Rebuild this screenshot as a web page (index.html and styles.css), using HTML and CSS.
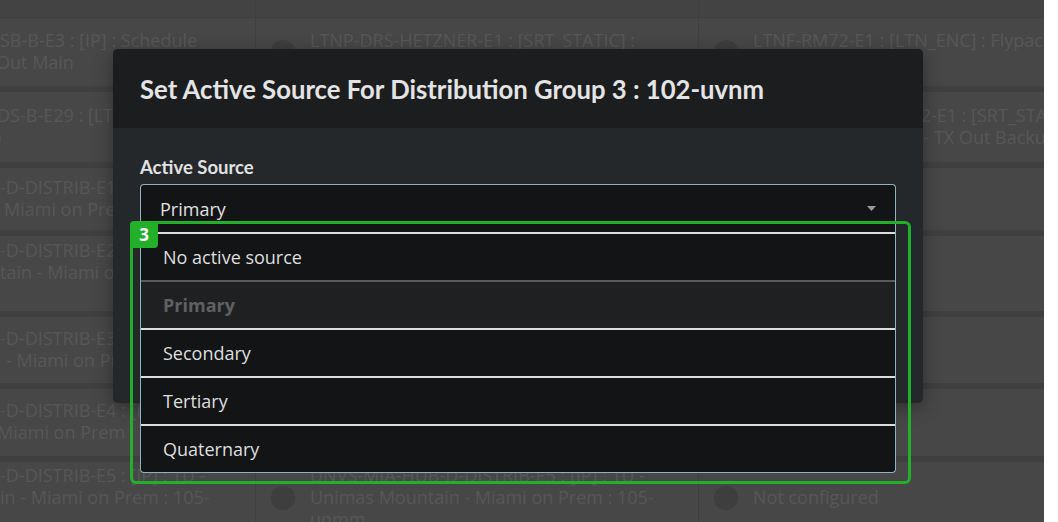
FILE: index.html
```html
<!DOCTYPE html>
<html lang="en">
<head>
  <meta charset="UTF-8">
  <title>Distribution Groups</title>
  <link rel="stylesheet" href="styles.css">
</head>
<body>

  <div class="page">
    <!-- dimmed board behind the modal -->
    <div class="board">
      <div class="cell cell-top"></div>
      <div class="cell cell-top"></div>
      <div class="cell cell-top"></div>

      <div class="cell cell-cut"><div class="lines"><div>SB-B-E3 : [IP] : Schedule</div><div class="in-2">Out Main</div></div></div>
      <div class="cell"><span class="dot"></span><div class="lines"><div>LTNP-DRS-HETZNER-E1 : [SRT_STATIC] :</div><div>Schedule TX Out Backup</div></div></div>
      <div class="cell"><span class="dot"></span><div class="lines"><div>LTNF-RM72-E1 : [LTN_ENC] : Flypack</div><div>Encoder Main</div></div></div>

      <div class="cell cell-cut"><div class="lines"><div class="in-1">DS-B-E29 : [LTN_ENC] : Flypack</div><div class="in-off">Encoder Backup</div></div></div>
      <div class="cell"><span class="dot"></span><div class="lines"><div>LTNP-DRS-B-E29 : [LTN_ENC]</div></div></div>
      <div class="cell"><span class="dot"></span><div class="lines"><div>LTNP-DRS-AZURE-W2-E1 : [SRT_STATIC] :</div><div>Schedule Sender 02 - TX Out Backup</div></div></div>

      <div class="cell cell-cut"><div class="lines"><div>-D-DISTRIB-E1 : [IP] : TU -</div><div class="in-3">Miami on Prem : 101-uvnm</div></div></div>
      <div class="cell"><span class="dot"></span><div class="lines"><div>UNVS-MIA-HUB-D-DISTRIB-E1</div></div></div>
      <div class="cell"><span class="dot"></span><div class="lines"><div>Not configured</div></div></div>

      <div class="cell cell-cut"><div class="lines"><div>-D-DISTRIB-E2 : [IP] : TU -</div><div>tain - Miami on Prem : 102-</div><div class="in-off">uvnm</div></div></div>
      <div class="cell"><span class="dot"></span><div class="lines"><div>UNVS-MIA-HUB-D-DISTRIB-E2</div></div></div>
      <div class="cell"><span class="dot"></span><div class="lines"><div>Not configured</div></div></div>

      <div class="cell cell-cut"><div class="lines"><div>-D-DISTRIB-E3 : [IP] : TU -</div><div class="in-4">- Miami on Prem : 103-uvnm</div></div></div>
      <div class="cell"><span class="dot"></span><div class="lines"><div>UNVS-MIA-HUB-D-DISTRIB-E3</div></div></div>
      <div class="cell"><span class="dot"></span><div class="lines"><div>Not configured</div></div></div>

      <div class="cell cell-cut"><div class="lines"><div>-D-DISTRIB-E4 : [IP] : TU -</div><div class="in-1">Miami on Prem : 104-uvnm</div></div></div>
      <div class="cell"><span class="dot"></span><div class="lines"><div>UNVS-MIA-HUB-D-DISTRIB-E4</div></div></div>
      <div class="cell"><span class="dot"></span><div class="lines"><div>Not configured</div></div></div>

      <div class="cell cell-cut"><div class="lines"><div>-D-DISTRIB-E5 : [IP] : TU -</div><div>in - Miami on Prem : 105-</div><div class="in-off">uvnm</div></div></div>
      <div class="cell"><span class="dot"></span><div class="lines"><div>UNVS-MIA-HUB-D-DISTRIB-E5 : [IP] : TU -</div><div>Unimas Mountain - Miami on Prem : 105-</div><div>unmm</div></div></div>
      <div class="cell"><span class="dot"></span><div class="lines"><div>Not configured</div></div></div>
    </div>

    <!-- modal -->
    <div class="modal">
      <div class="modal-header">
        <h2 class="modal-title">Set Active Source For Distribution Group 3 : 102-uvnm</h2>
      </div>
      <div class="modal-body">
        <label class="field-label">Active Source</label>
        <div class="select-wrap">
          <div class="select open">
            <span>Primary</span>
            <svg class="caret" width="9" height="5" viewBox="0 0 9 5"><path d="M0 0h9L4.5 5z" fill="#9a9a9a"/></svg>
          </div>
          <ul class="options">
            <li>No active source</li>
            <li class="selected">Primary</li>
            <li>Secondary</li>
            <li>Tertiary</li>
            <li>Quaternary</li>
          </ul>
        </div>
      </div>
    </div>

    <!-- annotation -->
    <div class="marker"><span class="marker-badge">3</span></div>
  </div>

</body>
</html>
```

FILE: styles.css
```css
html, body {
  margin: 0; padding: 0;
  background: #fff;
}
.page {
  position: relative;
  width: 1044px; height: 522px;
  overflow: hidden;
  background: #3f3f3f;
  font-family: 'Open Sans', 'Liberation Sans', sans-serif;
}
.board {
  display: grid;
  grid-template-columns: 443px 442px 442px;
  grid-template-rows: 12px 68px 70px 62px 75px 66px 67px 72px;
  column-gap: 1px;
  row-gap: 6px;
  margin-left: -188px;
}
.board .cell-top { margin-bottom: -5px; background: #434343; }
.cell {
  background: #474747;
  display: flex;
  align-items: center;
  padding-left: 15px;
  overflow: hidden;
}
.cell-cut { padding-left: 188px; }
.dot {
  flex: none;
  width: 24px; height: 24px;
  border-radius: 50%;
  background: #3e3e3e;
  margin-right: 15px;
}
.lines {
  font-size: 18px;
  line-height: 22px;
  color: #575757;
  white-space: nowrap;
  margin-top: -3px;
}
.in-1 { margin-left: -3px; }
.in-2 { margin-left: -4px; }
.in-3 { margin-left: 4px; }
.in-4 { margin-left: 6px; }
.in-off { margin-left: -134px; }

.modal {
  position: absolute;
  left: 113px; top: 49px;
  width: 810px;
  border-radius: 5px;
  background: #25282b;
  box-shadow: 0 4px 18px rgba(0,0,0,0.35);
}
.modal-header {
  background: #1c1d1f;
  height: 79px;
  border-radius: 5px 5px 0 0;
  display: flex;
  align-items: center;
  padding: 0 27px;
}
.modal-title {
  margin: 0;
  font-family: Lato, 'Open Sans', sans-serif;
  font-weight: 700;
  font-size: 25.7px;
  color: #e4e4e4;
}
.modal-body {
  padding: 28px 27px 171px;
}
.field-label {
  display: block;
  font-family: Lato, 'Open Sans', sans-serif;
  font-weight: 700;
  font-size: 18.5px;
  line-height: 22px;
  color: #e2e2e2;
  margin-bottom: 6px;
}
.select-wrap { position: relative; }
.select {
  height: 46px;
  border: 1px solid #8fb2c2;
  border-radius: 4px;
  background: #131416;
  display: flex;
  align-items: center;
  justify-content: space-between;
  padding: 0 19px;
  font-size: 18px;
  color: #e0e0e0;
}
.select.open {
  border-bottom: 0;
  height: 47px;
  border-radius: 4px 4px 0 0;
}
.caret { margin-right: 0; margin-top: -1px; }

.options {
  position: absolute;
  left: 0; right: 0; top: 100%;
  margin: 0; padding: 0;
  list-style: none;
  border: 1px solid #8fb2c2;
  border-top: 0;
  border-radius: 0 0 4px 4px;
  overflow: hidden;
  background: #131416;
  z-index: 2;
}
.options li {
  height: 46px;
  display: flex;
  align-items: center;
  padding: 0 22px;
  border-top: 2px solid #dcdcdc;
  font-size: 18px;
  color: #dedede;
}
.options li.selected {
  border-top-color: #5a5a5a;
  background: #1f2022;
  color: #5f6062;
  font-weight: 700;
}

.marker {
  position: absolute;
  left: 130px; top: 221px;
  width: 775px; height: 257px;
  border: 3px solid #22b02b;
  border-radius: 6px;
  z-index: 3;
}
.marker-badge {
  position: absolute;
  left: -3px; top: -3px;
  width: 28px; height: 27px;
  background: #22b02b;
  border-radius: 4px 0 4px 0;
  color: #fff;
  font-family: 'Open Sans', sans-serif;
  font-weight: 700;
  font-size: 17px;
  line-height: 27px;
  text-align: center;
}
```
